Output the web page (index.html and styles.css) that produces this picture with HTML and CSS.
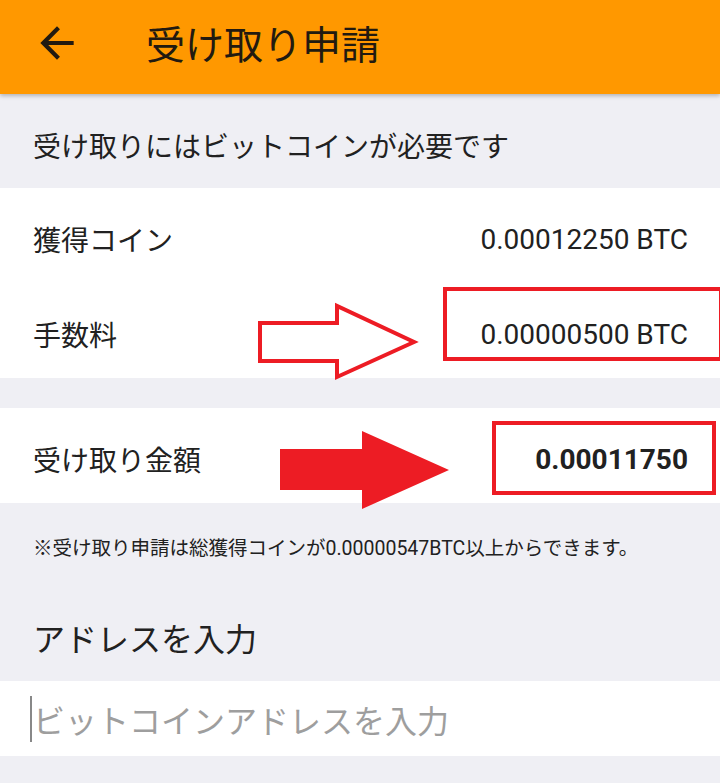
FILE: index.html
```html
<!DOCTYPE html>
<html lang="ja">
<head>
    <meta charset="UTF-8">
    <meta name="viewport" content="width=device-width, initial-scale=1.0">
    <title>受け取り申請</title>
    <link rel="stylesheet" href="styles.css">
</head>
<body>

<div class="app">
    <header class="toolbar">
        <svg class="back" viewBox="0 0 24 24" width="50" height="50">
            <path d="M20 11H7.83l5.59-5.59L12 4l-8 8 8 8 1.41-1.41L7.83 13H20v-2z" fill="#221a10"/>
        </svg>
        <h1>受け取り申請</h1>
    </header>

    <div class="section-title">受け取りにはビットコインが必要です</div>

    <div class="card">
        <div class="row">
            <span class="label">獲得コイン</span>
            <span class="value">0.00012250 BTC</span>
        </div>
        <div class="row">
            <span class="label">手数料</span>
            <span class="value">0.00000500 BTC</span>
        </div>
    </div>

    <div class="card total">
        <div class="row">
            <span class="label">受け取り金額</span>
            <span class="value bold">0.00011750</span>
        </div>
    </div>

    <p class="note">※受け取り申請は総獲得コインが0.00000547BTC以上からできます。</p>

    <div class="section-title address-title">アドレスを入力</div>

    <div class="input-wrap">
        <input type="text" class="address" placeholder="ビットコインアドレスを入力">
    </div>

    <!-- annotations drawn over the screen -->
    <div class="mark box-fee"></div>
    <div class="mark box-total"></div>
    <svg class="arrow" width="720" height="783" viewBox="0 0 720 783">
        <polygon points="260,323 337,323 337,306 414,342 337,377 337,361 260,361" fill="#fff" stroke="#ed1c24" stroke-width="4" stroke-linejoin="miter"/>
        <polygon points="280,449 362,449 362,431 449,470 362,509 362,490 280,490" fill="#ed1c24"/>
    </svg>
</div>

</body>
</html>
```

FILE: styles.css
```css
body {
    margin: 0;
    font-family: Roboto, "Noto Sans CJK JP", sans-serif;
    background-color: #efeff4;
    color: #212121;
}

.app {
    position: relative;
    width: 720px;
    height: 783px;
    overflow: hidden;
}

.toolbar {
    height: 94px;
    background-color: #ff9800;
    display: flex;
    align-items: center;
    padding-left: 32px;
    box-shadow: 0 2px 4px rgba(0, 0, 0, 0.25);
    position: relative;
    z-index: 1;
}

.toolbar .back {
    margin-top: -8px;
}

.toolbar h1 {
    margin: -10px 0 0 64px;
    font-size: 39px;
    font-weight: normal;
    color: #221a10;
}

.section-title {
    height: 94px;
    display: flex;
    align-items: center;
    box-sizing: border-box;
    padding: 7px 0 0 33px;
    font-size: 28px;
}

.card {
    background-color: #fff;
}

.row {
    height: 95px;
    box-sizing: border-box;
    display: flex;
    align-items: center;
    justify-content: space-between;
    padding: 7px 32px 0 33px;
    font-size: 28px;
}

.card.total {
    margin-top: 30px;
}

.value.bold {
    font-weight: bold;
}

.note {
    margin: 0;
    height: 90px;
    box-sizing: border-box;
    padding: 34px 0 0 33px;
    font-size: 19.5px;
    line-height: 24px;
}

.address-title {
    height: 88px;
    font-size: 32px;
    padding-top: 0;
}

.input-wrap {
    background-color: #fff;
    height: 75px;
    display: flex;
    align-items: center;
    padding: 0 0 0 30px;
    box-sizing: border-box;
}

.address {
    border: none;
    outline: none;
    border-left: 2px solid #888;
    padding: 0 0 0 1px;
    font-family: "Noto Sans CJK JP", sans-serif;
    font-size: 32px;
    width: 600px;
    background: transparent;
}

.address::placeholder {
    color: #9e9e9e;
}

.mark {
    position: absolute;
    border: 4px solid #ed1c24;
    box-sizing: border-box;
}

.box-fee {
    left: 443px;
    top: 287px;
    width: 280px;
    height: 74px;
}

.box-total {
    left: 492px;
    top: 421px;
    width: 224px;
    height: 74px;
}

.arrow {
    position: absolute;
    left: 0;
    top: 0;
    pointer-events: none;
}
```
